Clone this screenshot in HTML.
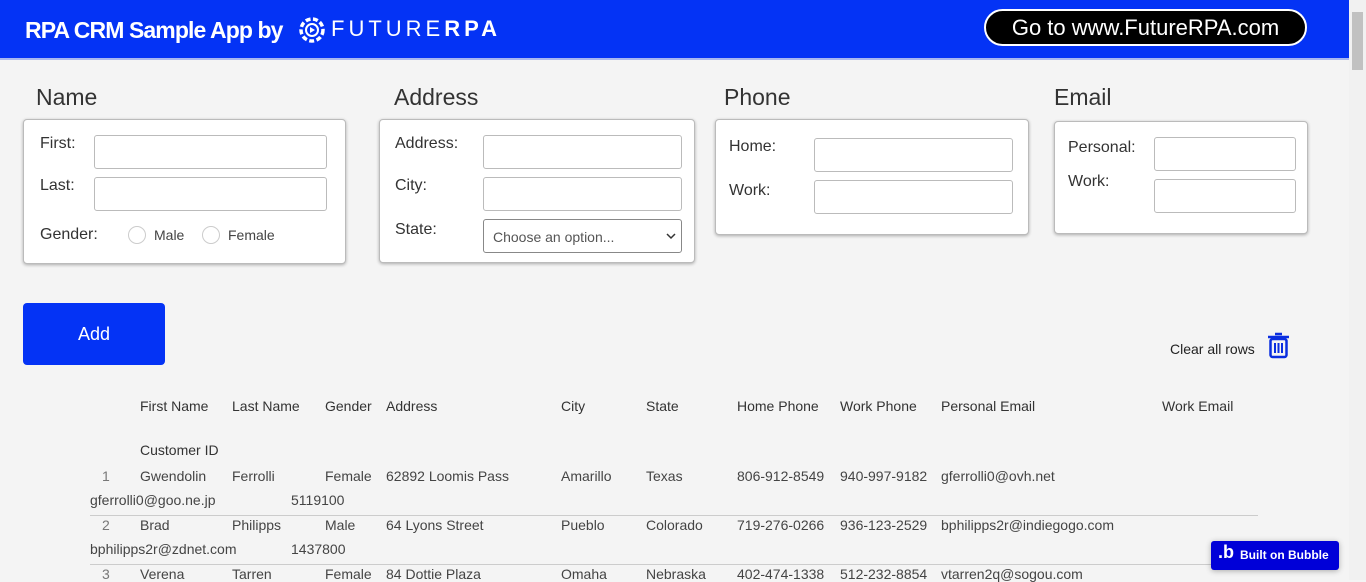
<!DOCTYPE html>
<html><head><style>
*{box-sizing:border-box;margin:0;padding:0}
body{width:1366px;height:580px;overflow:hidden;background:#f4f4f4;font-family:"Liberation Sans",sans-serif;color:#333;position:relative}
.a{position:absolute;white-space:nowrap}
.hdr{position:absolute;left:0;top:0;width:1349px;height:60px;background:#0433f5;border-bottom:2px solid #a9b8f0}
.card{position:absolute;background:#fff;border:1px solid #bbb;border-radius:4px;box-shadow:0 1px 3px rgba(0,0,0,.3)}
.inp{position:absolute;background:#fff;border:1px solid #bbb;border-radius:3px}
.h{font-size:23px;color:#333}
.l{font-size:16px;color:#333}
.th{font-size:14px;color:#333}
.td{font-size:14px;color:#444}
.rad{position:absolute;width:18px;height:18px;border:1px solid #ccc;border-radius:50%;background:#fff}
.line{position:absolute;left:90px;width:1168px;height:1px;background:#ccc}
</style></head><body>
<div class="hdr"></div>
<div class="a" style="left:25px;top:17px;font-size:23px;font-weight:bold;color:#fff;letter-spacing:-0.9px">RPA CRM Sample App by</div>
<svg class="a" style="left:298px;top:16px" width="28" height="28" viewBox="0 0 28 28"><circle cx="14" cy="14" r="11" fill="none" stroke="#fff" stroke-width="3.5" stroke-dasharray="5 2.5"/><circle cx="14" cy="14" r="6" fill="none" stroke="#fff" stroke-width="2"/><path d="M12 11 L17 14 L12 17Z" fill="#fff"/></svg>
<div class="a" style="left:331px;top:16px;font-size:22px;color:#fff;letter-spacing:4px">FUTURE<b>RPA</b></div>
<div class="a" style="left:984px;top:9px;width:323px;height:37px;background:#000;border:2px solid #fff;border-radius:19px;color:#fff;font-size:22px;text-align:center;line-height:33px">Go to www.FutureRPA.com</div>
<div class="a" style="left:1349px;top:0;width:17px;height:580px;background:#f1f1f1"></div>
<div class="a" style="left:1352px;top:12px;width:11px;height:58px;background:#c1c1c1"></div>

<div class="a h" style="left:36px;top:84px">Name</div>
<div class="card" style="left:23px;top:119px;width:323px;height:145px"></div>
<div class="a l" style="left:40px;top:135px">First:</div>
<div class="inp" style="left:94px;top:135px;width:233px;height:34px"></div>
<div class="a l" style="left:40px;top:177px">Last:</div>
<div class="inp" style="left:94px;top:177px;width:233px;height:34px"></div>
<div class="a l" style="left:40px;top:226px">Gender:</div>
<div class="rad" style="left:128px;top:226px"></div><div class="a td" style="left:154px;top:227px">Male</div>
<div class="rad" style="left:202px;top:226px"></div><div class="a td" style="left:228px;top:227px">Female</div>

<div class="a h" style="left:394px;top:84px">Address</div>
<div class="card" style="left:379px;top:119px;width:316px;height:144px"></div>
<div class="a l" style="left:395px;top:135px">Address:</div>
<div class="inp" style="left:483px;top:135px;width:199px;height:34px"></div>
<div class="a l" style="left:395px;top:177px">City:</div>
<div class="inp" style="left:483px;top:177px;width:199px;height:34px"></div>
<div class="a l" style="left:395px;top:221px">State:</div>
<div class="inp" style="left:483px;top:219px;width:199px;height:34px;border-color:#888"></div>
<div class="a td" style="left:493px;top:229px;color:#555">Choose an option...</div>
<svg class="a" style="left:666px;top:232px" width="10" height="8"><path d="M1 2 L5 6 L9 2" fill="none" stroke="#333" stroke-width="1.5"/></svg>

<div class="a h" style="left:724px;top:84px">Phone</div>
<div class="card" style="left:715px;top:119px;width:314px;height:116px"></div>
<div class="a l" style="left:729px;top:138px">Home:</div>
<div class="inp" style="left:814px;top:138px;width:199px;height:34px"></div>
<div class="a l" style="left:729px;top:182px">Work:</div>
<div class="inp" style="left:814px;top:180px;width:199px;height:34px"></div>

<div class="a h" style="left:1054px;top:84px">Email</div>
<div class="card" style="left:1054px;top:121px;width:254px;height:113px"></div>
<div class="a l" style="left:1068px;top:139px">Personal:</div>
<div class="inp" style="left:1154px;top:137px;width:142px;height:34px"></div>
<div class="a l" style="left:1068px;top:173px">Work:</div>
<div class="inp" style="left:1154px;top:179px;width:142px;height:34px"></div>

<div class="a" style="left:23px;top:303px;width:142px;height:62px;background:#0433f5;border-radius:4px;color:#fff;font-size:18px;text-align:center;line-height:62px">Add</div>
<div class="a td" style="left:1170px;top:341px;color:#222">Clear all rows</div>
<svg class="a" style="left:1266px;top:331px" width="25" height="28" viewBox="0 0 25 28"><path d="M9 3h7M2 6h21" stroke="#0a2ee0" stroke-width="2.5" fill="none"/><rect x="4.5" y="8" width="16" height="18" rx="2" fill="none" stroke="#0a2ee0" stroke-width="2.5"/><path d="M9 12v10M12.5 12v10M16 12v10" stroke="#0a2ee0" stroke-width="2"/></svg>

<div class="a th" style="left:140px;top:398px">First Name</div>
<div class="a th" style="left:232px;top:398px">Last Name</div>
<div class="a th" style="left:325px;top:398px">Gender</div>
<div class="a th" style="left:386px;top:398px">Address</div>
<div class="a th" style="left:561px;top:398px">City</div>
<div class="a th" style="left:646px;top:398px">State</div>
<div class="a th" style="left:737px;top:398px">Home Phone</div>
<div class="a th" style="left:840px;top:398px">Work Phone</div>
<div class="a th" style="left:941px;top:398px">Personal Email</div>
<div class="a th" style="left:1162px;top:398px">Work Email</div>
<div class="a th" style="left:140px;top:442px">Customer ID</div>

<div class="a td" style="left:102px;top:468px;color:#777">1</div>
<div class="a td" style="left:140px;top:468px">Gwendolin</div>
<div class="a td" style="left:232px;top:468px">Ferrolli</div>
<div class="a td" style="left:325px;top:468px">Female</div>
<div class="a td" style="left:386px;top:468px">62892 Loomis Pass</div>
<div class="a td" style="left:561px;top:468px">Amarillo</div>
<div class="a td" style="left:646px;top:468px">Texas</div>
<div class="a td" style="left:737px;top:468px">806-912-8549</div>
<div class="a td" style="left:840px;top:468px">940-997-9182</div>
<div class="a td" style="left:941px;top:468px">gferrolli0@ovh.net</div>
<div class="a td" style="left:90px;top:492px">gferrolli0@goo.ne.jp</div>
<div class="a td" style="left:291px;top:492px">5119100</div>
<div class="line" style="top:515px"></div>

<div class="a td" style="left:102px;top:517px;color:#777">2</div>
<div class="a td" style="left:140px;top:517px">Brad</div>
<div class="a td" style="left:232px;top:517px">Philipps</div>
<div class="a td" style="left:325px;top:517px">Male</div>
<div class="a td" style="left:386px;top:517px">64 Lyons Street</div>
<div class="a td" style="left:561px;top:517px">Pueblo</div>
<div class="a td" style="left:646px;top:517px">Colorado</div>
<div class="a td" style="left:737px;top:517px">719-276-0266</div>
<div class="a td" style="left:840px;top:517px">936-123-2529</div>
<div class="a td" style="left:941px;top:517px">bphilipps2r@indiegogo.com</div>
<div class="a td" style="left:90px;top:541px">bphilipps2r@zdnet.com</div>
<div class="a td" style="left:291px;top:541px">1437800</div>
<div class="line" style="top:564px"></div>

<div class="a td" style="left:102px;top:566px;color:#777">3</div>
<div class="a td" style="left:140px;top:566px">Verena</div>
<div class="a td" style="left:232px;top:566px">Tarren</div>
<div class="a td" style="left:325px;top:566px">Female</div>
<div class="a td" style="left:386px;top:566px">84 Dottie Plaza</div>
<div class="a td" style="left:561px;top:566px">Omaha</div>
<div class="a td" style="left:646px;top:566px">Nebraska</div>
<div class="a td" style="left:737px;top:566px">402-474-1338</div>
<div class="a td" style="left:840px;top:566px">512-232-8854</div>
<div class="a td" style="left:941px;top:566px">vtarren2q@sogou.com</div>

<div class="a" style="left:1211px;top:541px;width:128px;height:29px;background:#0000d8;border-radius:3px;box-shadow:0 1px 6px rgba(0,0,0,.3);color:#fff;font-size:12px;font-weight:bold;line-height:29px;padding-left:29px">Built on Bubble</div>
<div class="a" style="left:1218px;top:542px;color:#fff;font-size:18px;font-weight:bold">.b</div>
</body></html>
